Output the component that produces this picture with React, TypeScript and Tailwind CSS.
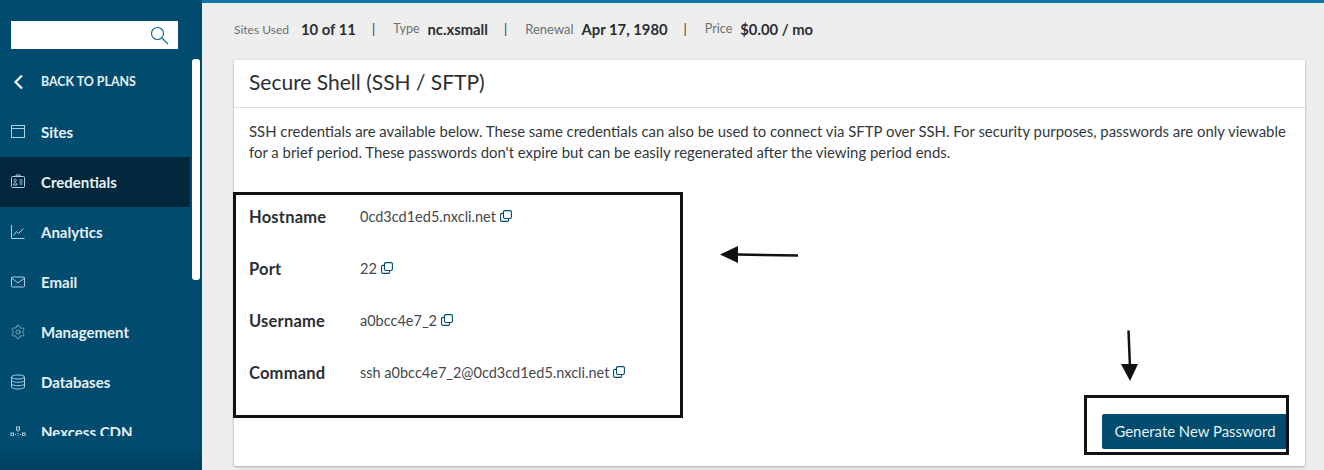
import { type FC, type ReactNode } from 'react';
import { Settings } from 'lucide-react';

const IconBase: FC<{ children: ReactNode }> = ({ children }) => (
  <svg width="16" height="16" viewBox="0 0 16 16" fill="none" stroke="currentColor" strokeWidth="1" className="shrink-0">
    {children}
  </svg>
);

const SitesIcon = () => (
  <IconBase>
    <rect x="1.5" y="1.5" width="13" height="12" />
    <path d="M1.5 4.5h13" />
  </IconBase>
);
const CredentialsIcon = () => (
  <IconBase>
    <rect x="1.5" y="2.5" width="13" height="11" rx="1" />
    <path d="M6 2.5V1h4v1.500M9.500 6h3M9.500 8h3M9.500 10h3M3.500 11c0-3 3.500-3 3.500 0zM5.200 5.200a1.200 1.200 0 1 0 .01 0" />
  </IconBase>
);
const AnalyticsIcon = () => (
  <IconBase>
    <path d="M1.500 1v13.500h13M3.500 11.500l3-4 2 2 5-5" />
  </IconBase>
);
const EmailIcon = () => (
  <IconBase>
    <rect x="1.500" y="3" width="13" height="10" rx="1" />
    <path d="M1.500 4l6.500 5 6.500-5" />
  </IconBase>
);
const GearIcon = () => <Settings size={16} strokeWidth={1} className="shrink-0" />;
const DatabaseIcon = () => (
  <IconBase>
    <ellipse cx="8" cy="3" rx="6.500" ry="2" />
    <path d="M1.500 3v10c0 1.100 2.900 2 6.500 2s6.500-.9 6.500-2V3M1.500 6.300c0 1.100 2.900 2 6.500 2s6.500-.9 6.500-2M1.500 9.700c0 1.100 2.900 2 6.500 2s6.500-.9 6.500-2" />
  </IconBase>
);
const CdnIcon = () => (
  <IconBase>
    <rect x="6.500" y="3" width="3" height="3" />
    <rect x="1" y="9" width="2.500" height="3" />
    <rect x="12.500" y="9" width="2.500" height="3" />
    <path d="M8 7v6M5 10.500h1M10 10.500h1" strokeDasharray="1 1" />
  </IconBase>
);
const CopyIcon = () => (
  <svg width="12" height="12" viewBox="0 0 12 12" fill="none" stroke="#004b6f" strokeWidth="1.100" className="shrink-0">
    <rect x="3.500" y="0.600" width="7.900" height="7.900" rx="1.200" />
    <path d="M3.500 3.400H1.800a1.200 1.200 0 0 0-1.200 1.200v5.600a1.200 1.200 0 0 0 1.200 1.200h5.600a1.200 1.200 0 0 0 1.200-1.200V8.500" />
  </svg>
);

const navItems = [
  { label: 'Sites', Icon: SitesIcon },
  { label: 'Credentials', Icon: CredentialsIcon, active: true },
  { label: 'Analytics', Icon: AnalyticsIcon },
  { label: 'Email', Icon: EmailIcon },
  { label: 'Management', Icon: GearIcon },
  { label: 'Databases', Icon: DatabaseIcon },
  { label: 'Nexcess CDN', Icon: CdnIcon },
];

const stats = [
  { label: 'Sites Used', value: '10 of 11', labelClass: 'mr-[12px] text-[12px]' },
  { label: 'Type', value: 'nc.xsmall', labelClass: 'mr-[8px] text-[12.5px]' },
  { label: 'Renewal', value: 'Apr 17, 1980', labelClass: 'mr-[8px] text-[13px]' },
  { label: 'Price', value: '$0.00 / mo', labelClass: 'mr-[8px] text-[12.5px]' },
];

const credentials = [
  { label: 'Hostname', value: '0cd3cd1ed5.nxcli.net' },
  { label: 'Port', value: '22' },
  { label: 'Username', value: 'a0bcc4e7_2' },
  { label: 'Command', value: 'ssh a0bcc4e7_2@0cd3cd1ed5.nxcli.net' },
];

const Sidebar: FC = () => (
  <aside className="relative flex h-full w-[202px] shrink-0 flex-col bg-[#004b6e] text-[#e6f1f5]">
    <div className="mt-[21px] ml-[11px] flex h-[28px] w-[167px] items-center justify-end bg-white pr-[9px] text-[#1d6f94]">
      <svg width="19" height="19" viewBox="0 0 19 19" fill="none" stroke="currentColor" strokeWidth="1.200">
        <circle cx="7.500" cy="7.500" r="6" />
        <path d="M12 12l6 6" />
      </svg>
    </div>
    <div className="mt-[21px] flex h-[24px] items-center pl-[13px]">
      <svg width="12" height="16" viewBox="0 0 12 16" fill="none" stroke="#f2f7f9" strokeWidth="2.200">
        <path d="M9 1.500L2.500 8 9 14.500" />
      </svg>
      <span className="ml-[16px] text-[12.4px] font-bold text-[#e6f1f5]">BACK TO PLANS</span>
    </div>
    <nav className="mt-[13px] h-[329px] w-[190px] overflow-hidden">
      {navItems.map(({ label, Icon, active }) => (
        <div
          key={label}
          className={`flex h-[50px] items-center pl-[10px] ${active ? 'bg-[#01273c]' : ''}`}
        >
          <span className="flex w-[31px] text-[#a9d3e3]">
            <Icon />
          </span>
          <span className="text-[15px] font-bold">{label}</span>
        </div>
      ))}
    </nav>
    <div className="absolute top-[59px] left-[192px] h-[221px] w-[8px] rounded-[3px] bg-white" />
    <div className="mt-auto h-[20px] bg-gradient-to-b from-[#004b6e] to-[#003f5d]" />
  </aside>
);

const App: FC = () => (
  <div
    className="relative flex h-[470px] w-[1324px] overflow-hidden bg-[#eeeeee]"
    style={{ fontFamily: 'Lato, "Noto Sans", sans-serif' }}
  >
    <Sidebar />
    <main className="flex min-w-0 flex-1 flex-col">
      <div className="h-[3px] bg-[#0a79aa]" />
      <div className="flex h-[57px] items-center pb-[4px] pl-[32px] text-[#2b2f33]">
        {stats.map((s, i) => (
          <div key={s.label} className="flex items-center">
            {i > 0 ? <span className="mr-[18px] ml-[16px] text-[13px] text-[#333333]">|</span> : null}
            <span className={`text-[#6b6f73] ${s.labelClass}`}>{s.label}</span>
            <span className="text-[14.8px] font-bold">{s.value}</span>
          </div>
        ))}
      </div>
      <section className="ml-[32px] flex h-[406px] w-[1071px] flex-col rounded-[2px] bg-white shadow-[0_1px_3px_rgba(0,0,0,0.3)]">
        <header className="flex h-[48px] items-center border-b border-[#dddddd] px-[15px] pb-[3px]">
          <h1 className="text-[21px] text-[#2b2f33]">Secure Shell (SSH / SFTP)</h1>
        </header>
        <p className="mt-[13px] px-[15px] text-[14.9px] leading-[21px] whitespace-nowrap text-[#33373b]">
          SSH credentials are available below. These same credentials can also be used to connect via SFTP over SSH. For security purposes, passwords are only viewable
          <br />
          for a brief period. These passwords don't expire but can be easily regenerated after the viewing period ends.
        </p>
        <dl className="mt-[28px] px-[15px]">
          {credentials.map((c) => (
            <div key={c.label} className="flex h-[52px] items-center">
              <dt className="w-[111px] text-[16.5px] font-bold tracking-[0.2px] text-[#2b2f33]">{c.label}</dt>
              <dd className="flex items-center gap-[4px] text-[14.5px] text-[#44484c]">
                {c.value}
                <span className="-mt-[3px]"><CopyIcon /></span>
              </dd>
            </div>
          ))}
        </dl>
        <div className="mt-auto flex justify-end pr-[17px] pb-[17px]">
          <button
            type="button"
            className="flex h-[35px] w-[186px] items-center justify-center rounded-[2px] bg-[#004b6e] text-[14.9px] text-[#e6f1f5]"
          >
            Generate New Password
          </button>
        </div>
      </section>
    </main>

    {/* annotations drawn on top of the screenshot */}
    <div className="absolute top-[192px] left-[233px] h-[226px] w-[450px] border-[3px] border-[#111111]" />
    <div className="absolute top-[395px] left-[1084px] h-[60px] w-[205px] border-[3px] border-[#111111]" />
    <svg className="absolute top-[240px] left-[718px]" width="82" height="30" viewBox="0 0 82 30">
      <path d="M20 14.500L80 15.500" stroke="#111111" strokeWidth="2.500" />
      <path d="M2 14.500L20 6v17z" fill="#111111" />
    </svg>
    <svg className="absolute top-[328px] left-[1118px]" width="26" height="56" viewBox="0 0 26 56">
      <path d="M10.500 2.500L12 40" stroke="#111111" strokeWidth="2.500" />
      <path d="M3 36h17l-8 17z" fill="#111111" />
    </svg>
  </div>
);

export default App;
